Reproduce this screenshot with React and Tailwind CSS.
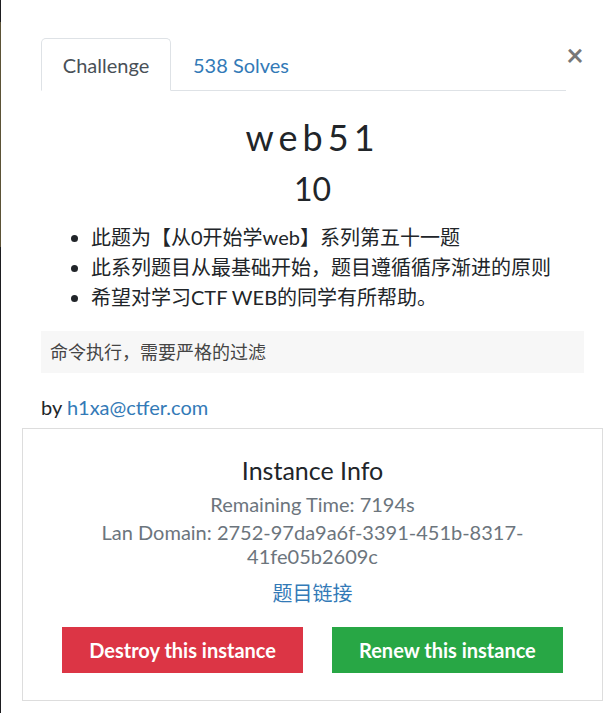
import { useState } from "react";

const FONT = { fontFamily: "Lato, 'Noto Sans CJK SC', sans-serif" };

export default function App() {
  const [tab, setTab] = useState("challenge");

  const notes = [
    "此题为【从0开始学web】系列第五十一题",
    "此系列题目从最基础开始，题目遵循循序渐进的原则",
    "希望对学习CTF WEB的同学有所帮助。",
  ];

  return (
    <div className="flex h-[713px] w-full bg-white text-[#212529]" style={FONT}>
      {/* backdrop edge */}
      <div className="flex w-px flex-col">
        <div className="h-[22px] bg-[#1d1d20]" />
        <div className="h-[225px] bg-[#5b5236]" />
        <div className="flex-1 bg-[#1d1d20]" />
      </div>

      <div className="flex flex-1 flex-col pl-[40px] pr-[25px] pt-[38px]">
        {/* tabs */}
        <div className="flex items-start">
          <ul className="flex flex-1 border-b border-[#dee2e6]">
            <li
              onClick={() => setTab("challenge")}
              className="-mb-px flex h-[53px] w-[130px] cursor-pointer items-center justify-center rounded-t-[5px] border border-b-white border-[#dee2e6] bg-white pt-[1px] text-[20px] text-[#495057]"
            >
              Challenge
            </li>
            <li
              onClick={() => setTab("solves")}
              className="flex h-[52px] cursor-pointer items-center px-[22px] pt-[1px] text-[20px] text-[#337ab7]"
            >
              538 Solves
            </li>
          </ul>
          <button className="mt-[1px] w-[18px] text-center text-[30px] font-bold leading-[30px] text-[#777]">
            ×
          </button>
        </div>

        {/* challenge header */}
        <h3 className="mt-[24px] text-center text-[36px] leading-[44px] tracking-[0.14em]">web51</h3>
        <p className="mt-[10px] text-center text-[32px] leading-[40px]">10</p>

        <ul className="mt-[13px] list-disc pl-[50px] text-[20px] leading-[30px]">
          {notes.map((n) => (
            <li key={n}>{n}</li>
          ))}
        </ul>

        <div className="mt-[19px] flex h-[42px] items-center bg-[#f7f7f7] px-[9px] text-[18px] text-[#444]">
          命令执行，需要严格的过滤
        </div>

        <p className="mt-[22px] text-[20px] leading-[24px]">
          by <a className="text-[#337ab7]">h1xa@ctfer.com</a>
        </p>

        {/* instance box */}
        <div className="-mx-[19px] mt-[9px] flex h-[273px] flex-col items-center border border-[#dddddd] pt-[26px]">
          <h4 className="text-[25px] leading-[30px] text-[#212529]">Instance Info</h4>
          <p className="mt-[7px] text-[20px] leading-[24px] text-[#6c757d]">Remaining Time: 7194s</p>
          <p className="mt-[4px] w-[450px] text-center text-[20px] leading-[24px] text-[#6c757d]">
            Lan Domain: 2752-97da9a6f-3391-451b-8317-41fe05b2609c
          </p>
          <a className="mt-[13px] text-[20px] leading-[24px] text-[#337ab7]">题目链接</a>
          <div className="mt-[22px] flex gap-[29px]">
            <button className="h-[46px] bg-[#dc3545] px-[27px] text-[20px] font-bold text-white">
              Destroy this instance
            </button>
            <button className="h-[46px] bg-[#28a745] px-[27px] text-[20px] font-bold text-white">
              Renew this instance
            </button>
          </div>
        </div>
      </div>
    </div>
  );
}
